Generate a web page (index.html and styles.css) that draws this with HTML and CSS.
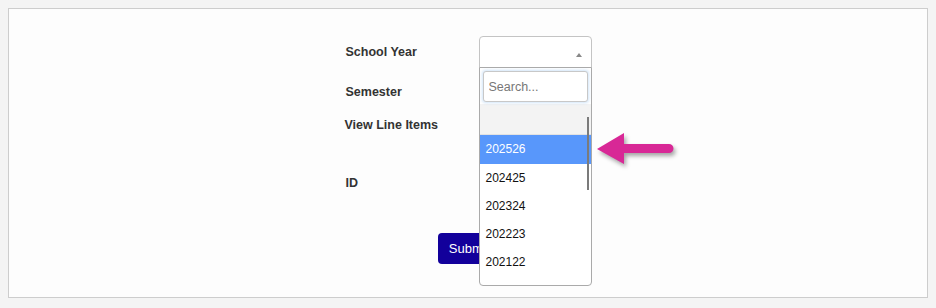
FILE: index.html
```html
<!doctype html>
<html>
<head>
	<meta charset="utf-8">
	<title>Report filter</title>
	<link rel="stylesheet" href="styles.css">
</head>
<body>
	<div class="card">
		<form class="filter">
			<div class="row row-year">
				<label class="lbl">School Year</label>
				<div class="select">
					<span class="caret"></span>

					<div class="dropdown">
						<div class="search-wrap">
							<input class="search" type="text" placeholder="Search...">
						</div>
						<ul class="results">
							<li class="opt opt-empty"></li>
							<li class="opt opt-active">202526</li>
							<li class="opt">202425</li>
							<li class="opt">202324</li>
							<li class="opt">202223</li>
							<li class="opt">202122</li>
						</ul>
						<span class="scrollbar"></span>
					</div>

					<svg class="pointer" width="90" height="46" viewBox="0 0 90 46">
						<path d="M7 23 L34 7 L34 18 L79 18 A4.5 4.5 0 0 1 79 27 L34 27 L34 38 Z" fill="#d82896"/>
					</svg>
				</div>
			</div>
			<div class="row row-sem">
				<label class="lbl">Semester</label>
			</div>
			<div class="row row-lines">
				<label class="lbl lbl-tight">View Line Items</label>
			</div>
			<div class="row row-id">
				<label class="lbl">ID</label>
			</div>
			<div class="actions">
				<button class="btn" type="button">Submit</button>
			</div>
		</form>
	</div>
</body>
</html>
```

FILE: styles.css
```css
body {
	margin: 8px;
	background: #f4f4f4;
	font-family: "Liberation Sans", Arial, sans-serif;
}

.card {
	height: 288px;
	border: 1px solid #cdcdcd;
	background: #fdfdfd;
	display: flex;
	justify-content: center;
}

.filter {
	width: 247px;
	padding-top: 27px;
}

.row {
	display: flex;
	align-items: center;
}

.row-year {
	height: 32px;
}

.row-sem {
	height: 46px;
	margin-top: 1px;
}

.row-lines {
	height: 20px;
}

.row-id {
	height: 96px;
}

.lbl {
	box-sizing: border-box;
	width: 134px;
	padding-left: 1px;
	font-size: 12.5px;
	font-weight: bold;
	color: #333;
}

.lbl-tight {
	padding-left: 0;
}

/* select with open dropdown */
.select {
	position: relative;
	box-sizing: border-box;
	width: 113px;
	height: 32px;
	border: 1px solid #c4c4c4;
	border-radius: 4px 4px 0 0;
	background: #fff;
}

.caret {
	position: absolute;
	right: 9px;
	top: 16px;
	width: 0;
	height: 0;
	border-left: 3px solid transparent;
	border-right: 3px solid transparent;
	border-bottom: 4px solid #888;
}

.dropdown {
	position: absolute;
	left: -1px;
	top: 30px;
	box-sizing: border-box;
	width: 113px;
	height: 219px;
	border: 1px solid #aaa;
	border-radius: 0 0 4px 4px;
	background: #fff;
	overflow: hidden;
	z-index: 2;
}

.search-wrap {
	padding: 3px 2px 2px 3px;
}

.search {
	box-sizing: border-box;
	width: 105px;
	height: 31px;
	margin: 0;
	padding: 0 5px;
	border: 1px solid #c8c8c8;
	border-radius: 3px;
	box-shadow: 0 0 3px 1px rgba(150, 195, 240, 0.45);
	font-family: inherit;
	font-size: 12.5px;
	outline: none;
}

.search::placeholder {
	color: #777;
}

.results {
	list-style: none;
	margin: 0;
	padding: 0;
}

.opt {
	height: 28px;
	line-height: 28px;
	padding-left: 6px;
	font-size: 12px;
	color: #111;
}

.opt-empty {
	height: 31px;
	background: #f3f3f3;
	border-bottom: 1px solid #e2e2e2;
	box-sizing: border-box;
}

.opt-active {
	height: 29px;
	line-height: 29px;
	background: #5897fb;
	color: #fff;
}

.scrollbar {
	position: absolute;
	right: 2px;
	top: 49px;
	width: 2px;
	height: 73px;
	background: #7b7b7b;
}

.pointer {
	position: absolute;
	left: 110px;
	top: 89px;
	overflow: visible;
	filter: drop-shadow(2px 3px 2px rgba(0, 0, 0, 0.35));
	z-index: 3;
}

.actions {
	display: flex;
	justify-content: center;
	margin-top: 2px;
	padding-left: 2px;
}

.btn {
	height: 31px;
	padding: 0 11px;
	border: none;
	border-radius: 4px;
	background: #12009b;
	color: #fff;
	font-family: inherit;
	font-size: 13px;
}
```
